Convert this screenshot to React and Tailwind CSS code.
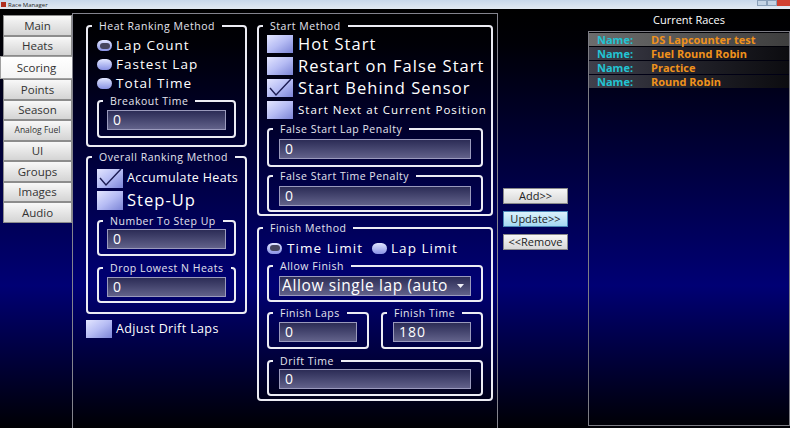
import React from 'react';

const font = { fontFamily: '"Open Sans", "Noto Sans", sans-serif' };

function Group({ label, className = '', children }) {
  return (
    <fieldset className={`min-w-0 rounded-[4px] border-2 border-[#ececf4] p-0 ${className}`}>
      <legend className="ml-[4px] px-[7px] text-[10.5px] leading-[12px] tracking-[0.05em] text-[#e4e4ee]">{label}</legend>
      {children}
    </fieldset>
  );
}

function Field({ value, className = '' }) {
  return (
    <div
      className={`flex h-[20px] items-center border border-[#9a9abc] bg-gradient-to-b from-[#2c2c56] to-[#62628a] pl-[5px] text-[14px] leading-[18px] text-white ${className}`}
    >
      {value}
    </div>
  );
}

function Radio({ checked }) {
  return (
    <span className="flex h-[11px] w-[15px] shrink-0 items-center justify-center rounded-full bg-gradient-to-b from-[#e2e6ff] to-[#8a92e4]">
      {checked && <span className="h-[6px] w-[10px] rounded-full bg-[#46465e]" />}
    </span>
  );
}

function Check({ checked, className = '' }) {
  return (
    <span
      className={`relative block h-[18px] w-[26px] shrink-0 bg-gradient-to-br from-[#e4e6ff] via-[#b6bcf4] to-[#7c84d6] ${className}`}
    >
      {checked && (
        <svg className="absolute left-0 top-[-2px]" width="26" height="21" viewBox="0 0 26 21">
          <path d="M3 11 L9 18 L24 2" fill="none" stroke="#1c1c52" strokeWidth="1.4" />
        </svg>
      )}
    </span>
  );
}

const tabs = ['Main', 'Heats', 'Scoring', 'Points', 'Season', 'Analog Fuel', 'UI', 'Groups', 'Images', 'Audio'];

const races = ['DS Lapcounter test', 'Fuel Round Robin', 'Practice', 'Round Robin'];

export default function App() {
  return (
    <div className="flex h-[428px] w-[790px] flex-col overflow-hidden bg-black" style={font}>
      {/* window title */}
      <div className="flex h-[9px] shrink-0 items-center bg-gradient-to-b from-[#c8d8ea] to-[#e2eaf2]">
        <span className="ml-[1px] h-[5px] w-[5px] bg-[#b03020]" />
        <span className="ml-[2px] text-[6px] leading-[6px] text-[#222]">Race Manager</span>
        <div className="ml-auto flex h-[6px] self-start">
          <span className="w-[10px] border border-[#8aa0b8] bg-[#c4d4e4]" />
          <span className="w-[10px] border border-[#8aa0b8] bg-[#c4d4e4]" />
          <span className="w-[13px] bg-[#d04030]" />
        </div>
      </div>

      <div className="flex flex-1 bg-[linear-gradient(to_bottom,#000000_0%,#000006_8%,#000074_66%,#000004_100%)] pt-[4px]">
        {/* tabs */}
        <div className="mt-[2px] flex w-[72px] shrink-0 flex-col">
          {tabs.map((t) =>
            t === 'Scoring' ? (
              <div
                key={t}
                className="flex h-[23px] w-[73px] items-center justify-center border border-[#a0a0a0] bg-gradient-to-b from-white to-[#f4f4f4] text-[11.5px] text-[#333]"
              >
                {t}
              </div>
            ) : (
              <div
                key={t}
                className={`ml-[3px] flex h-[20.5px] w-[69px] items-center justify-center border border-[#8c8c8c] bg-gradient-to-b from-[#f8f8f8] to-[#d4d4d4] text-[#333] ${
                  t === 'Analog Fuel' ? 'text-[8.5px]' : 'text-[11.5px]'
                }`}
              >
                {t}
              </div>
            )
          )}
        </div>

        {/* scoring panel */}
        <div className="flex w-[426px] shrink-0 border-l border-r border-t border-[#84848e] pl-[13px] pr-[3px] pt-[6px] tracking-[0.065em]">
          {/* left column */}
          <div className="flex w-[161px] shrink-0 flex-col">
            <Group label="Heat Ranking Method">
              <div className="px-[9px] pb-[7px] pt-[4px]">
                {[
                  ['Lap Count', true],
                  ['Fastest Lap', false],
                  ['Total Time', false],
                ].map(([l, c]) => (
                  <div key={l} className="flex h-[19px] items-center gap-[4px] text-[13.5px] text-white">
                    <Radio checked={c} />
                    {l}
                  </div>
                ))}
                <Group label="Breakout Time" className="mt-[2px]">
                  <div className="px-[8px] pb-[6px] pt-[3px]">
                    <Field value="0" />
                  </div>
                </Group>
              </div>
            </Group>

            <Group label="Overall Ranking Method" className="mt-[4px]">
              <div className="px-[9px] pb-[9px] pt-[6px]">
                <div className="flex h-[19px] items-center gap-[4px] whitespace-nowrap text-[12.5px] tracking-[0.03em] text-white">
                  <Check checked className="h-[19px] w-[24px]" />
                  Accumulate Heats
                </div>
                <div className="mt-[3px] flex h-[19px] items-center gap-[4px] text-[16.5px] text-white">
                  <Check className="h-[19px] w-[24px]" />
                  Step-Up
                </div>
                <Group label="Number To Step Up" className="mt-[5px]">
                  <div className="px-[8px] pb-[5px] pt-[2px]">
                    <Field value="0" />
                  </div>
                </Group>
                <Group label="Drop Lowest N Heats" className="mt-[6px]">
                  <div className="px-[8px] pb-[4px] pt-[3px]">
                    <Field value="0" />
                  </div>
                </Group>
              </div>
            </Group>

            <div className="mt-[6px] flex items-center gap-[4px] whitespace-nowrap text-[12.5px] tracking-[0.03em] text-white">
              <Check />
              Adjust Drift Laps
            </div>
          </div>

          {/* right column */}
          <div className="ml-[10px] flex w-[236px] shrink-0 flex-col">
            <Group label="Start Method">
              <div className="px-[8px] pb-[2px] pt-[3px]">
                <div className="flex flex-col gap-[4px]">
                  {[
                    ['Hot Start', false, 'text-[16.5px]'],
                    ['Restart on False Start', false, 'text-[16.5px]'],
                    ['Start Behind Sensor', true, 'text-[16.5px]'],
                    ['Start Next at Current Position', false, 'text-[11.5px]'],
                  ].map(([l, c, s]) => (
                    <div key={l} className={`flex h-[18px] items-center gap-[5px] whitespace-nowrap text-white ${s}`}>
                      <Check checked={c} />
                      {l}
                    </div>
                  ))}
                </div>
                <Group label="False Start Lap Penalty" className="mt-[4px]">
                  <div className="px-[10px] pb-[6px] pt-[4px]">
                    <Field value="0" />
                  </div>
                </Group>
                <Group label="False Start Time Penalty" className="mt-[3px]">
                  <div className="px-[10px] pb-[4px] pt-[4px]">
                    <Field value="0" />
                  </div>
                </Group>
              </div>
            </Group>

            <Group label="Finish Method" className="mt-[6px]">
              <div className="px-[8px] pb-[3px] pt-[5px]">
                <div className="flex h-[18px] items-center text-[13.5px] text-white">
                  <Radio checked />
                  <span className="ml-[5px]">Time Limit</span>
                  <span className="ml-[9px]">
                    <Radio />
                  </span>
                  <span className="ml-[4px]">Lap Limit</span>
                </div>
                <Group label="Allow Finish" className="mt-[3px]">
                  <div className="px-[10px] pb-[4px] pt-[4px]">
                    <div className="flex h-[20px] items-center border border-[#9a9abc] bg-gradient-to-b from-[#2c2c56] to-[#62628a] pl-[2px] pr-[6px] text-[15.5px] tracking-[0.04em] text-white">
                      <span className="flex-1 overflow-hidden whitespace-nowrap">Allow single lap (auto</span>
                      <svg width="7" height="4" viewBox="0 0 7 4">
                        <path d="M0 0 H7 L3.5 4 Z" fill="#f0f0f8" />
                      </svg>
                    </div>
                  </div>
                </Group>
                <div className="mt-[5px] flex gap-[12px]">
                  <Group label="Finish Laps" className="flex-1">
                    <div className="px-[10px] pb-[5px] pt-[3px]">
                      <Field value="0" />
                    </div>
                  </Group>
                  <Group label="Finish Time" className="flex-1">
                    <div className="px-[10px] pb-[5px] pt-[3px]">
                      <Field value="180" />
                    </div>
                  </Group>
                </div>
                <Group label="Drift Time" className="mt-[6px]">
                  <div className="px-[10px] pb-[5px] pt-[2px]">
                    <Field value="0" />
                  </div>
                </Group>
              </div>
            </Group>
          </div>
        </div>

        {/* buttons */}
        <div className="ml-[5px] mt-[175px] flex w-[65px] shrink-0 flex-col gap-[7px] text-[11px] text-[#222]">
          <div className="flex h-[16px] items-center justify-center border border-[#8a8a8a] bg-gradient-to-b from-[#f6f6f6] to-[#d8d8d8]">
            Add&gt;&gt;
          </div>
          <div className="flex h-[16px] items-center justify-center border border-[#4a88b8] bg-gradient-to-b from-[#dcf2fc] to-[#a4d8f2]">
            Update&gt;&gt;
          </div>
          <div className="flex h-[16px] items-center justify-center border border-[#8a8a8a] bg-gradient-to-b from-[#f6f6f6] to-[#d8d8d8]">
            &lt;&lt;Remove
          </div>
        </div>

        {/* current races */}
        <div className="ml-[20px] flex flex-1 flex-col">
          <div className="h-[14px] text-center text-[11px] leading-[14px] text-white">Current Races</div>
          <div className="mt-[4px] mb-[2px] flex-1 border border-[#7c7c84]">
            {races.map((r, i) => (
              <div
                key={r}
                className={`mt-[1px] flex h-[13px] items-center pl-[8px] text-[11px] font-bold leading-[13px] ${
                  i === 0
                    ? 'bg-gradient-to-r from-[#6c6c6c] to-[#3e3e3e]'
                    : 'bg-gradient-to-r from-[#40404c] via-[#22222a] to-[#0c0c10]'
                }`}
              >
                <span className="w-[54px] text-[#22c4d4]">Name:</span>
                <span className="text-[#f0921c]">{r}</span>
              </div>
            ))}
          </div>
        </div>
      </div>
    </div>
  );
}
